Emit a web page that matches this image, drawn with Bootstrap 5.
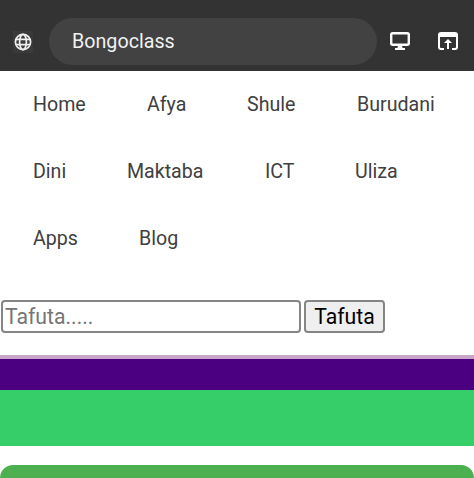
<!DOCTYPE html>
<html lang="sw">
<head>
  <meta charset="UTF-8">
  <meta name="viewport" content="width=device-width, initial-scale=1">
  <title>Bongoclass</title>
  <link href="https://cdn.jsdelivr.net/npm/bootstrap@5.3.0/dist/css/bootstrap.min.css" rel="stylesheet">
  <style>
    html, body { height: 478px; overflow: hidden; }
    body { font-family: Roboto, "Liberation Sans", sans-serif; background: #fff; }

    /* browser bar */
    .app-bar { height: 71px; background: #333; padding: 18px 0 6px 13px; color: #fff; }
    .globe-box { width: 20px; height: 22px; margin-top: 13px; background: #3a3a3a; }
    .url-pill { width: 328px; height: 47px; margin-left: 16px; padding: 1px 0 0 23px; background: #424242; border-radius: 24px; font-size: 19.7px; color: #f1f1f1; }
    .bar-icon { margin-top: 14px; }
    .icon-screen { margin-left: 13px; }
    .icon-open { margin-left: 28px; }

    /* menu */
    .menu-row { height: 67px; padding-left: 33px; font-size: 19.6px; color: #404040; }
    .menu-row span { display: block; }
    .w-home { width: 114px; }
    .w-afya { width: 100px; }
    .w-shule { width: 110px; }
    .w-dini { width: 94px; }
    .w-maktaba { width: 138px; }
    .w-ict { width: 90px; }
    .w-apps { width: 106px; }

    /* search */
    .search-row { padding: 28px 0 0 1px; height: 83px; gap: 3px; }
    .search-input { width: 300px; height: 33px; padding: 1px 2px; font-size: 21.2px; font-family: Roboto, sans-serif; color: #000; border: 2px solid #858585; border-radius: 4px; background: #fff; outline: none; }
    .search-input::placeholder { color: #757575; opacity: 1; }
    .search-btn { width: 81px; height: 33px; padding: 0; font-size: 21.2px; line-height: 1; color: #000; background: #efefef; border: 2px solid #858585; border-radius: 4px; }

    /* colour bands */
    .band-line { height: 4px; background: #c9a6c9; }
    .band-purple { height: 31px; background: #4b0082; }
    .band-green { height: 56px; background: #36ce68; }
    .green-card { height: 13px; margin-top: 19px; background: #4caf50; border-radius: 13px 13px 0 0; }
  </style>
</head>
<body>

  <div class="app-bar d-flex align-items-start">
    <div class="globe-box d-flex align-items-center justify-content-center">
      <svg width="18" height="18" viewBox="0 0 18 18" fill="none" stroke="#eee" stroke-width="1.7">
        <circle cx="9" cy="9" r="7.6"/>
        <ellipse cx="9" cy="9" rx="3.4" ry="7.6"/>
        <path d="M2 6.4h14M2 11.6h14"/>
      </svg>
    </div>
    <div class="url-pill d-flex align-items-center">Bongoclass</div>
    <svg class="bar-icon icon-screen" width="20" height="18" viewBox="0 0 20 18" fill="none">
      <rect x="1.2" y="1.2" width="17.6" height="11.6" rx="1.5" stroke="#fff" stroke-width="2.4"/>
      <path d="M8 14h4l.6 2H15v2H5v-2h2.4z" fill="#fff"/>
    </svg>
    <svg class="bar-icon icon-open" width="20" height="18" viewBox="0 0 20 18" fill="none">
      <path d="M6 17H3a2 2 0 0 1-2-2V3a2 2 0 0 1 2-2h14a2 2 0 0 1 2 2v12a2 2 0 0 1-2 2h-3" stroke="#fff" stroke-width="2"/>
      <path d="M1 2h18v3H1z" fill="#fff"/>
      <path d="M10 7l4 4h-3v6H9v-6H6z" fill="#fff"/>
    </svg>
  </div>

  <nav>
    <div class="menu-row d-flex align-items-center"><span class="w-home">Home</span><span class="w-afya">Afya</span><span class="w-shule">Shule</span><span>Burudani</span></div>
    <div class="menu-row d-flex align-items-center"><span class="w-dini">Dini</span><span class="w-maktaba">Maktaba</span><span class="w-ict">ICT</span><span>Uliza</span></div>
    <div class="menu-row d-flex align-items-center"><span class="w-apps">Apps</span><span>Blog</span></div>
  </nav>

  <form class="search-row d-flex align-items-start">
    <input class="search-input" type="text" placeholder="Tafuta.....">
    <button class="search-btn" type="button">Tafuta</button>
  </form>

  <div class="band-line"></div>
  <div class="band-purple"></div>
  <div class="band-green"></div>
  <div class="green-card"></div>

  <script src="https://cdn.jsdelivr.net/npm/bootstrap@5.3.0/dist/js/bootstrap.bundle.min.js"></script>
</body>
</html>
